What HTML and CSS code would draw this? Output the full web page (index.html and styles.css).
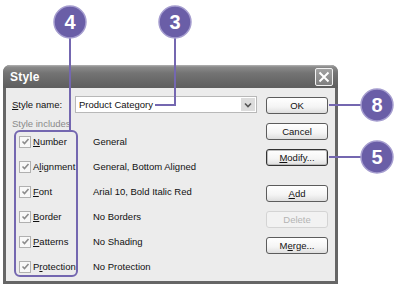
FILE: index.html
```html
<!DOCTYPE html>
<html lang="en">
<head>
    <meta charset="UTF-8">
    <meta name="viewport" content="width=device-width, initial-scale=1.0">
    <title>Style</title>
    <link rel="stylesheet" href="styles.css">
</head>
<body>
    <div class="figure">

        <div class="dialog">
            <div class="titlebar">
                <span class="title">Style</span>
                <span class="close">
                    <svg width="12" height="12" viewBox="0 0 12 12"><path d="M1.5 1.5 L10.5 10.5 M10.5 1.5 L1.5 10.5" stroke="#fff" stroke-width="2"/></svg>
                </span>
            </div>
            <div class="content">
                <div class="main">
                    <div class="name-row">
                        <span class="label"><u>S</u>tyle name:</span>
                        <div class="select">
                            <span class="value">Product Category</span>
                            <span class="arrow">
                                <svg width="8" height="6" viewBox="0 0 8 6"><path d="M1 1.5 L4 4.5 L7 1.5" stroke="#555" stroke-width="1.6" fill="none"/></svg>
                            </span>
                        </div>
                    </div>
                    <div class="group-label">Style includes</div>
                    <ul class="includes" id="includes"></ul>
                </div>
                <div class="buttons">
                    <button>OK</button>
                    <button>Cancel</button>
                    <button class="focused"><u>M</u>odify...</button>
                    <button class="spaced"><u>A</u>dd</button>
                    <button disabled>Delete</button>
                    <button>M<u>e</u>rge...</button>
                </div>
            </div>
        </div>

        <svg class="callouts" width="400" height="287" viewBox="0 0 400 287">
            <g stroke="#7467b0" stroke-width="2" fill="none">
                <rect x="15" y="131" width="62" height="145" rx="5"/>
                <path d="M70 36 V131"/>
                <path d="M175 36 V105 H155"/>
                <path d="M329 105 H362"/>
                <path d="M329 157 H362"/>
            </g>
            <g fill="#6a5ea7" stroke="#a59dcf" stroke-width="1.5">
                <circle cx="70" cy="22" r="16"/>
                <circle cx="175" cy="22" r="16"/>
                <circle cx="377" cy="105" r="16"/>
                <circle cx="377" cy="157" r="16"/>
            </g>
            <g class="num">
                <text x="70" y="29">4</text>
                <text x="175" y="29">3</text>
                <text x="377" y="112">8</text>
                <text x="377" y="164">5</text>
            </g>
        </svg>
    </div>

    <script>
        const items = [
            { key: "N", rest: "umber", pre: "", value: "General" },
            { pre: "A", key: "l", rest: "ignment", value: "General, Bottom Aligned" },
            { pre: "", key: "F", rest: "ont", value: "Arial 10, Bold Italic Red" },
            { pre: "", key: "B", rest: "order", value: "No Borders" },
            { pre: "", key: "P", rest: "atterns", value: "No Shading" },
            { pre: "P", key: "r", rest: "otection", value: "No Protection" }
        ];

        const list = document.getElementById('includes');
        items.forEach(item => {
            const li = document.createElement('li');
            li.innerHTML = `
                <span class="check">
                    <svg width="9" height="9" viewBox="0 0 9 9"><path d="M1.5 4.5 L3.5 6.5 L7.5 2" stroke="#8c8c8c" stroke-width="1.6" fill="none"/></svg>
                </span>
                <span class="name">${item.pre}<u>${item.key}</u>${item.rest}</span>
                <span class="desc">${item.value}</span>
            `;
            list.appendChild(li);
        });
    </script>
</body>
</html>
```

FILE: styles.css
```css
body {
    margin: 0;
    background-color: #ffffff;
    font-family: "Liberation Sans", Arial, sans-serif;
}

.figure {
    position: relative;
    width: 400px;
    height: 287px;
    padding: 65px 0 0 3px;
    box-sizing: border-box;
}

.dialog {
    width: 335px;
    height: 219px;
    box-sizing: border-box;
    background-color: #666666;
    border-radius: 7px 7px 0 0;
    padding: 0 3px 3px 3px;
    display: flex;
    flex-direction: column;
}

.titlebar {
    height: 23px;
    margin: 0 -3px;
    padding: 0 5px 0 7px;
    border-radius: 7px 7px 0 0;
    background: linear-gradient(#b4b4b4 0, #8a8a8a 2px, #747474 8px, #686868 16px, #5e5e5e 100%);
    display: flex;
    justify-content: space-between;
    align-items: center;
}

.title {
    color: #ffffff;
    font-weight: bold;
    font-size: 12px;
    letter-spacing: 0.2px;
}

.close {
    width: 16px;
    height: 16px;
    border: 1px solid #f2f2f2;
    border-radius: 2px;
    background: linear-gradient(#a2a2a2, #808080);
    display: flex;
    justify-content: center;
    align-items: center;
}

.content {
    flex: 1;
    background-color: #ececec;
    display: flex;
    padding: 0 7px 0 6px;
    font-size: 9.5px;
    color: #111111;
}

.main {
    flex: 1;
}

.name-row {
    display: flex;
    align-items: center;
    margin-top: 8px;
    height: 17px;
}

.name-row .label {
    width: 63px;
}

.select {
    flex: 1;
    height: 17px;
    box-sizing: border-box;
    background-color: #ffffff;
    border: 1px solid #b8b8b8;
    display: flex;
    align-items: center;
    padding: 0 1px 0 3px;
}

.select .value {
    flex: 1;
}

.select .arrow {
    width: 14px;
    height: 13px;
    background-color: #dcdcdc;
    display: flex;
    justify-content: center;
    align-items: center;
}

.group-label {
    margin-top: 5px;
    height: 11px;
    line-height: 11px;
    color: #8a8a8a;
}

.includes {
    list-style-type: none;
    margin: 0;
    padding: 0 0 0 7px;
}

.includes li {
    height: 25px;
    display: flex;
    align-items: center;
}

.check {
    width: 12px;
    height: 12px;
    box-sizing: border-box;
    border: 1px solid #b0b0b0;
    background-color: #f8f8f8;
    display: flex;
    justify-content: center;
    align-items: center;
    margin-right: 2px;
}

.name {
    width: 60px;
}

.buttons {
    width: 62px;
    margin-left: 9px;
    padding-top: 9px;
    display: flex;
    flex-direction: column;
    gap: 9px;
}

.buttons button {
    height: 17px;
    padding: 0;
    font-family: "Liberation Sans", Arial, sans-serif;
    font-size: 9.5px;
    color: #111111;
    background: linear-gradient(#ffffff, #f4f4f4 60%, #dedede);
    border: 1px solid #5c5c5c;
    border-radius: 3px;
}

.buttons button.focused {
    border-color: #333333;
    box-shadow: inset 0 0 0 1px #bdbdbd;
}

.buttons button.spaced {
    margin-top: 10px;
}

.buttons button:disabled {
    color: #b4b4b4;
    border-color: #d4d4d4;
    background: #f2f2f2;
}

.callouts {
    position: absolute;
    left: 0;
    top: 0;
}

.num text {
    fill: #ffffff;
    font-family: "Liberation Sans", Arial, sans-serif;
    font-weight: bold;
    font-size: 20px;
    text-anchor: middle;
}
```
